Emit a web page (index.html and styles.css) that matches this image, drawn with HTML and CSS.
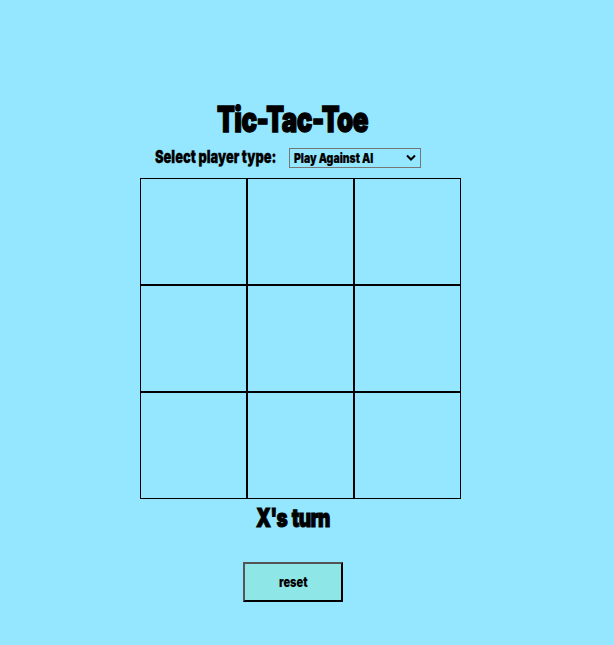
FILE: index.html
```html
<!DOCTYPE html>
<html lang="en">
<head>
<meta charset="utf-8">
<title>Tic-Tac-Toe</title>
<link rel="stylesheet" href="styles.css">
</head>
<body>
<main class="game">
  <h1 class="title"><span class="condensed">Tic-Tac-Toe</span></h1>
  <div class="options">
    <div class="label"><span class="condensed">Select player type:</span></div>
    <div class="select" role="combobox" aria-expanded="false" tabindex="0">
      <span class="condensed">Play Against AI</span>
      <svg class="chevron" width="10" height="8" viewBox="0 0 10 8"><path d="M1 1.5 L5 5.5 L9 1.5" fill="none" stroke="#000" stroke-width="2"/></svg>
    </div>
  </div>
  <div class="board">
    <div class="cell"></div><div class="cell"></div><div class="cell"></div>
    <div class="cell"></div><div class="cell"></div><div class="cell"></div>
    <div class="cell"></div><div class="cell"></div><div class="cell"></div>
  </div>
  <h2 class="status"><span class="condensed">X's turn</span></h2>
  <button class="reset" type="button"><span class="condensed">reset</span></button>
</main>
</body>
</html>
```
FILE: styles.css
```css
* { box-sizing: border-box; }
body {
  margin: 0;
  background: #94e7ff;
  color: #000;
  font-family: Impact, Inter, sans-serif;
  font-weight: 900;
}
.game {
  width: 321px;
  margin-left: 140px;
  padding-top: 98px;
}
.condensed {
  display: inline-block;
  white-space: nowrap;
  transform: scaleX(.735);
  transform-origin: left center;
}
.title {
  margin: 0 0 0 77px;
  height: 42px;
  font-size: 35px;
  line-height: 43px;
  font-weight: 900;
  letter-spacing: -.7px;
  -webkit-text-stroke: 1.4px #000;
}
.title .condensed { transform: scaleX(.742); }
.options {
  display: flex;
  height: 38px;
  padding: 8px 0 0 15px;
}
.label {
  width: 134px;
  font-size: 17.5px;
  line-height: 18px;
  -webkit-text-stroke: .3px #000;
}
.select {
  display: flex;
  justify-content: space-between;
  align-items: center;
  width: 132px;
  height: 20px;
  padding: 0 4px;
  border: 1px solid #767676;
  font-size: 13.5px;
  line-height: 18px;
  -webkit-text-stroke: .2px #000;
}
.select .condensed { transform: scaleX(.775); }
.chevron { flex: none; }
.board {
  display: grid;
  grid-template-columns: repeat(3, 107px);
  grid-auto-rows: 107px;
}
.cell { border: 1px solid #000; }
.status {
  margin: 0 0 0 116px;
  height: 63px;
  padding-top: 3px;
  font-size: 26px;
  line-height: 32px;
  font-weight: 900;
  letter-spacing: -.9px;
  word-spacing: 2px;
  -webkit-text-stroke: 1px #000;
}
.reset {
  display: block;
  width: 100px;
  height: 40px;
  margin-left: 103px;
  padding: 0 0 0 34px;
  border: 2px solid #000;
  border-top-color: #555;
  border-left-color: #555;
  background: #8fe6e6;
  color: #000;
  font: 900 14px/18px Impact, Inter, sans-serif;
  text-align: left;
}
.reset .condensed { transform: scaleX(.785); }
```
